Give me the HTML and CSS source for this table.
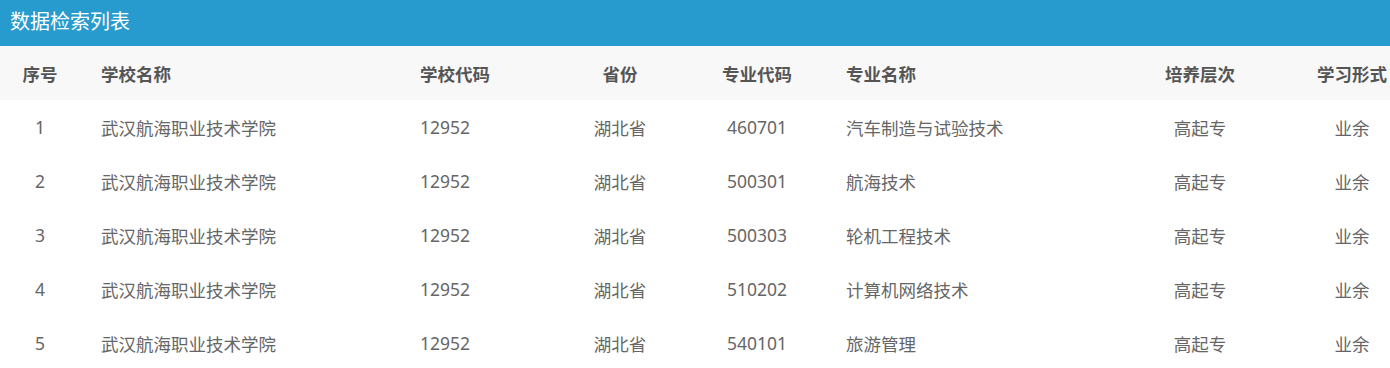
FILE: index.html
```html
<!DOCTYPE html>
<html lang="zh">
<head>
<meta charset="utf-8">
<title>数据检索列表</title>
<link rel="stylesheet" href="styles.css">
</head>
<body>
<div class="panel">
  <div class="panel-title">数据检索列表</div>
  <div class="table">
    <div class="row head">
      <div class="c c1">序号</div>
      <div class="c c2">学校名称</div>
      <div class="c c3">学校代码</div>
      <div class="c c4">省份</div>
      <div class="c c5">专业代码</div>
      <div class="c c6">专业名称</div>
      <div class="c c7">培养层次</div>
      <div class="c c8">学习形式</div>
    </div>
    <div class="row">
      <div class="c c1">1</div>
      <div class="c c2">武汉航海职业技术学院</div>
      <div class="c c3">12952</div>
      <div class="c c4">湖北省</div>
      <div class="c c5">460701</div>
      <div class="c c6">汽车制造与试验技术</div>
      <div class="c c7">高起专</div>
      <div class="c c8">业余</div>
    </div>
    <div class="row">
      <div class="c c1">2</div>
      <div class="c c2">武汉航海职业技术学院</div>
      <div class="c c3">12952</div>
      <div class="c c4">湖北省</div>
      <div class="c c5">500301</div>
      <div class="c c6">航海技术</div>
      <div class="c c7">高起专</div>
      <div class="c c8">业余</div>
    </div>
    <div class="row">
      <div class="c c1">3</div>
      <div class="c c2">武汉航海职业技术学院</div>
      <div class="c c3">12952</div>
      <div class="c c4">湖北省</div>
      <div class="c c5">500303</div>
      <div class="c c6">轮机工程技术</div>
      <div class="c c7">高起专</div>
      <div class="c c8">业余</div>
    </div>
    <div class="row">
      <div class="c c1">4</div>
      <div class="c c2">武汉航海职业技术学院</div>
      <div class="c c3">12952</div>
      <div class="c c4">湖北省</div>
      <div class="c c5">510202</div>
      <div class="c c6">计算机网络技术</div>
      <div class="c c7">高起专</div>
      <div class="c c8">业余</div>
    </div>
    <div class="row">
      <div class="c c1">5</div>
      <div class="c c2">武汉航海职业技术学院</div>
      <div class="c c3">12952</div>
      <div class="c c4">湖北省</div>
      <div class="c c5">540101</div>
      <div class="c c6">旅游管理</div>
      <div class="c c7">高起专</div>
      <div class="c c8">业余</div>
    </div>
  </div>
</div>
</body>
</html>
```

FILE: styles.css
```css
html, body {
  margin: 0;
  padding: 0;
  background: #ffffff;
  overflow: hidden;
}
body {
  font-family: "Noto Sans", "Noto Sans CJK SC", sans-serif;
  color: #666666;
}
.panel-title {
  height: 46px;
  background: #279bcd;
  color: #ffffff;
  font-size: 20px;
  line-height: 44px;
  padding-left: 10px;
}
.row {
  display: grid;
  grid-template-columns: 80px 320px 160px 120px 154px 286px 160px 110px;
  height: 54px;
  align-items: center;
  font-size: 17.5px;
}
.row.head {
  background: #f8f8f8;
  color: #555555;
  font-weight: bold;
}
.c {
  white-space: nowrap;
}
.c1 { text-align: center; }
.c2 { padding-left: 21px; }
.c3 { padding-left: 20px; }
.c4 { text-align: center; }
.c5 { text-align: center; }
.c6 { padding-left: 12px; }
.c7 { text-align: center; }
.c8 { text-align: center; padding-left: 34px; }
```
